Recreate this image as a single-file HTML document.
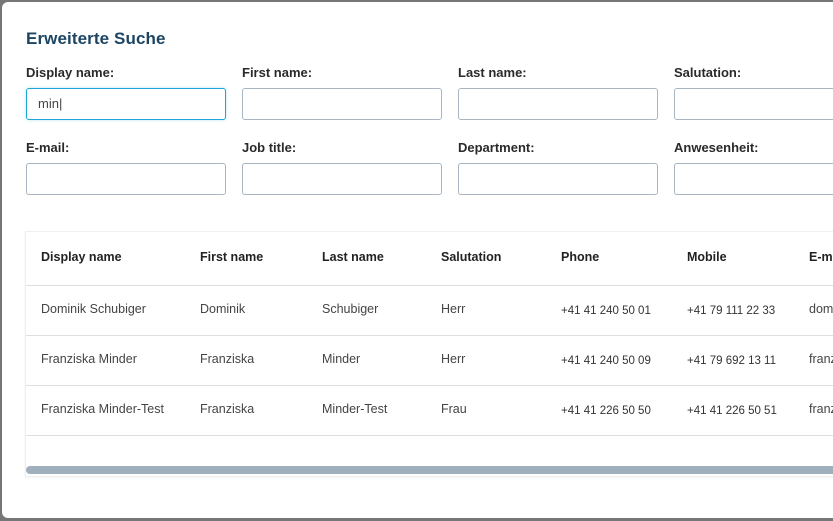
<!DOCTYPE html><html><head><style>
body{margin:0;width:833px;height:521px;overflow:hidden;background:#777;font-family:"Liberation Sans",sans-serif;position:relative}
.m{position:absolute;left:2px;top:2px;width:860px;height:516px;background:#fff;border-radius:6px}
.t{position:absolute;left:26px;top:29px;font-size:17px;color:#1d4563;font-weight:bold;letter-spacing:0.1px}
.l{position:absolute;font-size:13px;color:#2a2a2a;font-weight:bold}
.i{position:absolute;width:198px;height:30px;border:1px solid #a9b5c0;border-radius:3px;background:#fff}
.tb{position:absolute;left:25px;top:231px;width:830px;height:244px;border:1px solid #f0f0f0;border-right:none;box-shadow:0 1px 3px rgba(0,0,0,.05)}
.c{position:absolute;font-size:12.5px;color:#444;white-space:nowrap}
.h{color:#222;font-size:12.5px;font-weight:bold}
.p{font-size:11.5px;color:#333}
.ln{position:absolute;left:26px;width:830px;height:1px;background:#dedede}
.sb{position:absolute;left:26px;top:466px;width:830px;height:8px;background:#a0afbc;border-radius:4px}
</style></head><body><div class="m"></div>
<div class="t">Erweiterte Suche</div>
<div class="l" style="left:26px;top:65px">Display name:</div>
<div class="l" style="left:242px;top:65px">First name:</div>
<div class="l" style="left:458px;top:65px">Last name:</div>
<div class="l" style="left:674px;top:65px">Salutation:</div>
<div class="i" style="left:26px;top:88px;border-color:#1ea7d6;box-shadow:0 0 3px rgba(30,167,214,.3)"><span style="position:absolute;left:11px;top:7px;font-size:13px;color:#444">min|</span></div>
<div class="i" style="left:242px;top:88px"></div>
<div class="i" style="left:458px;top:88px"></div>
<div class="i" style="left:674px;top:88px"></div>
<div class="l" style="left:26px;top:140px">E-mail:</div>
<div class="l" style="left:242px;top:140px">Job title:</div>
<div class="l" style="left:458px;top:140px">Department:</div>
<div class="l" style="left:674px;top:140px">Anwesenheit:</div>
<div class="i" style="left:26px;top:163px"></div>
<div class="i" style="left:242px;top:163px"></div>
<div class="i" style="left:458px;top:163px"></div>
<div class="i" style="left:674px;top:163px"></div>
<div class="tb"></div>
<div class="ln" style="top:285px"></div><div class="ln" style="top:335px"></div><div class="ln" style="top:385px"></div><div class="ln" style="top:435px"></div>
<div class="sb"></div>
<div class="c h" style="left:41px;top:250px">Display name</div><div class="c h" style="left:200px;top:250px">First name</div><div class="c h" style="left:322px;top:250px">Last name</div><div class="c h" style="left:441px;top:250px">Salutation</div><div class="c h" style="left:561px;top:250px">Phone</div><div class="c h" style="left:687px;top:250px">Mobile</div><div class="c h" style="left:809px;top:250px">E-mail</div>
<div class="c" style="left:41px;top:302px">Dominik Schubiger</div><div class="c" style="left:200px;top:302px">Dominik</div><div class="c" style="left:322px;top:302px">Schubiger</div><div class="c" style="left:441px;top:302px">Herr</div><div class="c p" style="left:561px;top:305px">+41 41 240 50 01</div><div class="c p" style="left:687px;top:305px">+41 79 111 22 33</div><div class="c" style="left:809px;top:302px">dominik</div>
<div class="c" style="left:41px;top:352px">Franziska Minder</div><div class="c" style="left:200px;top:352px">Franziska</div><div class="c" style="left:322px;top:352px">Minder</div><div class="c" style="left:441px;top:352px">Herr</div><div class="c p" style="left:561px;top:355px">+41 41 240 50 09</div><div class="c p" style="left:687px;top:355px">+41 79 692 13 11</div><div class="c" style="left:809px;top:352px">franziska</div>
<div class="c" style="left:41px;top:402px">Franziska Minder-Test</div><div class="c" style="left:200px;top:402px">Franziska</div><div class="c" style="left:322px;top:402px">Minder-Test</div><div class="c" style="left:441px;top:402px">Frau</div><div class="c p" style="left:561px;top:405px">+41 41 226 50 50</div><div class="c p" style="left:687px;top:405px">+41 41 226 50 51</div><div class="c" style="left:809px;top:402px">franziska</div>
</body></html>
